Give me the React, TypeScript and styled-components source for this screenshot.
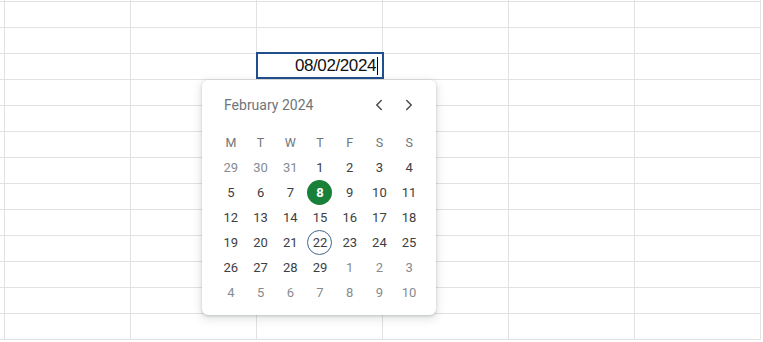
import React from 'react';
import styled, { createGlobalStyle } from 'styled-components';
import { ChevronLeft, ChevronRight } from 'lucide-react';

const GlobalStyle = createGlobalStyle`
  html, body {
    margin: 0;
    padding: 0;
    background: #ffffff;
    overflow: hidden;
  }
  * {
    box-sizing: border-box;
  }
`;

type Day = { label: number; outside?: boolean; selected?: boolean; today?: boolean };

const WEEKDAYS = ['M', 'T', 'W', 'T', 'F', 'S', 'S'];

const buildDays = (): Day[] => {
  const days: Day[] = [];
  [29, 30, 31].forEach((d) => days.push({ label: d, outside: true }));
  for (let d = 1; d <= 29; d += 1) {
    days.push({ label: d, selected: d === 8, today: d === 22 });
  }
  for (let d = 1; d <= 10; d += 1) days.push({ label: d, outside: true });
  return days;
};

const COLUMN_COUNT = 7;
const ROW_COUNT = 14;

const App: React.FC = () => {
  const days = buildDays();
  const cells = Array.from({ length: COLUMN_COUNT * ROW_COUNT });

  return (
    <Page>
      <GlobalStyle />
      <Sheet>
        {cells.map((_, i) => (
          <Cell key={i} />
        ))}
      </Sheet>

      <Editor>
        <EditorText>08/02/2024</EditorText>
        <Caret />
      </Editor>

      <Picker>
        <PickerHeader>
          <MonthLabel>February 2024</MonthLabel>
          <NavButton aria-label="Previous month">
            <ChevronLeft size={18} strokeWidth={2} />
          </NavButton>
          <NavButton aria-label="Next month">
            <ChevronRight size={18} strokeWidth={2} />
          </NavButton>
        </PickerHeader>
        <DayGrid>
          {WEEKDAYS.map((w, i) => (
            <Weekday key={`w-${i}`}>{w}</Weekday>
          ))}
          {days.map((day, i) => (
            <DayCell key={`d-${i}`}>
              <DayMark $outside={day.outside} $selected={day.selected} $today={day.today}>
                {day.label}
              </DayMark>
            </DayCell>
          ))}
        </DayGrid>
      </Picker>
    </Page>
  );
};

const Page = styled.div`
  position: relative;
  width: 763px;
  height: 342px;
  overflow: hidden;
  background: #ffffff;
`;

const Sheet = styled.div`
  display: grid;
  grid-template-columns: 5px repeat(6, 126px);
  grid-template-rows: 2px repeat(13, 26px);
`;

const Cell = styled.div`
  border-right: 1px solid #e2e2e2;
  border-bottom: 1px solid #e2e2e2;
`;

const Editor = styled.div`
  position: absolute;
  left: 256px;
  top: 52px;
  width: 128px;
  height: 27px;
  border: 2px solid #1f4f8f;
  background: #ffffff;
  display: flex;
  align-items: center;
  justify-content: flex-end;
  padding-right: 4px;
`;

const EditorText = styled.span`
  font-family: 'Liberation Sans', Arial, sans-serif;
  font-size: 17px;
  letter-spacing: -0.4px;
  color: #111111;
  line-height: 1;
`;

const Caret = styled.span`
  width: 1px;
  height: 18px;
  margin-left: 1px;
  background: #000000;
`;

const Picker = styled.div`
  position: absolute;
  left: 202px;
  top: 80px;
  width: 234px;
  padding: 0 12px 10px 14px;
  background: #ffffff;
  border-radius: 6px;
  box-shadow: 0 1px 3px rgba(60, 64, 67, 0.25), 0 3px 8px 2px rgba(60, 64, 67, 0.12);
  font-family: Roboto, 'Noto Sans', Arial, sans-serif;
`;

const PickerHeader = styled.div`
  height: 50px;
  display: flex;
  align-items: center;
`;

const MonthLabel = styled.span`
  flex: 1;
  padding-left: 8px;
  font-size: 14px;
  color: #70757a;
`;

const NavButton = styled.span`
  width: 30px;
  height: 30px;
  display: flex;
  align-items: center;
  justify-content: center;
  color: #4a4d51;
`;

const DayGrid = styled.div`
  display: grid;
  grid-template-columns: repeat(7, 1fr);
  grid-auto-rows: 25px;
  width: 208px;
`;

const Weekday = styled.div`
  display: flex;
  align-items: center;
  justify-content: center;
  font-size: 12.5px;
  color: #70757a;
`;

const DayCell = styled.div`
  display: flex;
  align-items: center;
  justify-content: center;
`;

const DayMark = styled.span<{ $outside?: boolean; $selected?: boolean; $today?: boolean }>`
  width: 25px;
  height: 25px;
  border-radius: 50%;
  display: flex;
  align-items: center;
  justify-content: center;
  font-size: 13px;
  color: ${({ $outside, $selected }) => {
    if ($selected) return '#ffffff';
    return $outside ? '#878b90' : '#3c4043';
  }};
  font-weight: ${({ $selected }) => ($selected ? 700 : 400)};
  background: ${({ $selected }) => ($selected ? '#188038' : 'transparent')};
  border: ${({ $today }) => ($today ? '1px solid #41698f' : 'none')};
`;

export default App;
